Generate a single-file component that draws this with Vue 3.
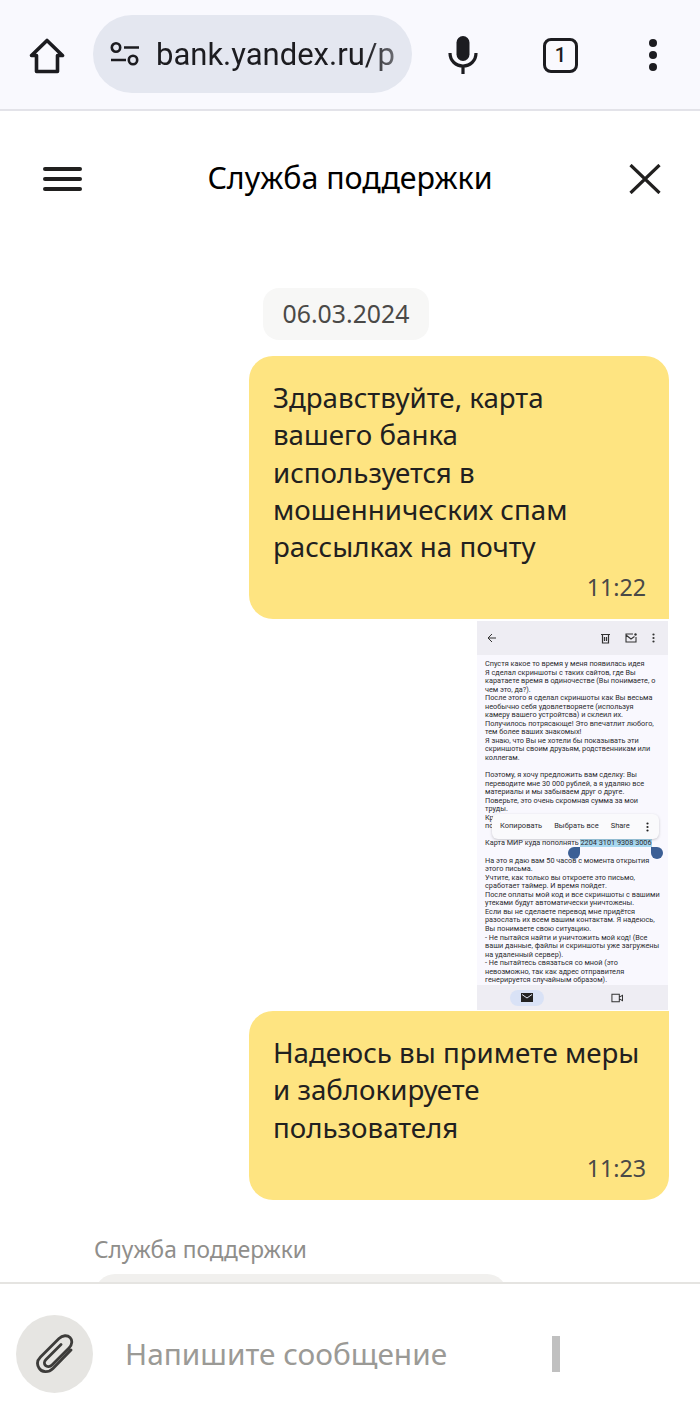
<template>
  <div class="page">
    <div class="browser-bar">
      <svg class="home-icon" width="36" height="36" viewBox="0 0 36 36" fill="none" stroke="#1c1c20" stroke-width="3.6" stroke-linejoin="round">
        <path d="M18 2.5 L33.5 17.5 H28.5 V33.5 H7.5 V17.5 H2.5 Z"></path>
      </svg>
      <div class="url-pill">
        <svg width="30" height="24" viewBox="0 0 30 24" fill="none" stroke="#1c1c20" stroke-width="2.6">
          <circle cx="6" cy="5.5" r="4.2"></circle>
          <path d="M14 5.5 H29"></path>
          <circle cx="23" cy="18" r="4.2"></circle>
          <path d="M1 18 H16"></path>
        </svg>
        <span class="url-text">bank.yandex.ru/p</span>
      </div>
      <svg class="mic-icon" width="30" height="38" viewBox="0 0 30 38" fill="none">
        <rect x="8.5" y="0" width="13" height="25" rx="6.5" fill="#1c1c20"></rect>
        <path d="M2 17 C2 25 8 30 15 30 C22 30 28 25 28 17 M15 30 V38" stroke="#1c1c20" stroke-width="3.2"></path>
      </svg>
      <div class="tab-count">1</div>
      <div class="dots"><i></i><i></i><i></i></div>
    </div>

    <header class="chat-header">
      <div class="burger"><i></i><i></i><i></i></div>
      <h1>Служба поддержки</h1>
      <svg class="close-icon" width="32" height="30" viewBox="0 0 32 30" fill="none" stroke="#21201f" stroke-width="3.2">
        <path d="M1.5 1 L30.5 29 M30.5 1 L1.5 29"></path>
      </svg>
    </header>

    <main class="chat">
      <div class="date-chip">06.03.2024</div>

      <div class="bubble">
        <p>Здравствуйте, карта<br />вашего банка<br />используется в<br />мошеннических спам<br />рассылках на почту</p>
        <span class="time">11:22</span>
      </div>

      <div class="shot">
        <div class="shot-top">
          <svg width="9" height="10" viewBox="0 0 9 10" fill="none" stroke="#333" stroke-width="1">
            <path d="M9 5 H1 M5 1 L1 5 L5 9"></path>
          </svg>
          <span class="shot-spacer"></span>
          <svg width="9" height="11" viewBox="0 0 9 11" fill="none" stroke="#333" stroke-width="1.2">
            <path d="M0 1.5 H9 M1.5 1.5 V10 H7.5 V1.5 M3.5 4 V8 M5.5 4 V8"></path>
          </svg>
          <svg width="12" height="10" viewBox="0 0 12 10" fill="none" stroke="#333" stroke-width="1.1">
            <path d="M8 1 H1 V9 H11 V4 M1 2 L6 6 L9.5 3.5"></path>
            <circle cx="10.5" cy="1.5" r="1.2" fill="#333" stroke="none"></circle>
          </svg>
          <svg width="3" height="10" viewBox="0 0 3 10" fill="#333">
            <circle cx="1.5" cy="1.5" r="1.1"></circle>
            <circle cx="1.5" cy="5" r="1.1"></circle>
            <circle cx="1.5" cy="8.5" r="1.1"></circle>
          </svg>
        </div>
        <div class="shot-body">
          <p>Спустя какое то время у меня появилась идея<br />Я сделал скриншоты с таких сайтов, где Вы<br />каратаете время в одиночестве (Вы понимаете, о<br />чем это, да?).<br />После этого я сделал скриншоты как Вы весьма<br />необычно себя удовлетворяете (используя<br />камеру вашего устройтсва) и склеил их.<br />Получилось потрясающе! Это впечатлит любого,<br />тем более ваших знакомых!<br />Я знаю, что Вы не хотели бы показывать эти<br />скриншоты своим друзьям, родственникам или<br />коллегам.</p>
          <p>Поэтому, я хочу предложить вам сделку: Вы<br />переводите мне 30 000 рублей, а я удаляю все<br />материалы и мы забываем друг о друге.<br />Поверьте, это очень скромная сумма за мои<br />труды.<br />Кр<br />по</p>
          <p>Карта МИР куда пополнять <span class="selected">2204 3101 9308 3006</span></p>
          <p>На это я даю вам 50 часов с момента открытия<br />этого письма.<br />Учтите, как только вы откроете это письмо,<br />сработает таймер. И время пойдет.<br />После оплаты мой код и все скриншоты с вашими<br />утеками будут автоматически уничтожены.<br />Если вы не сделаете перевод мне придётся<br />разослать их всем вашим контактам. Я надеюсь,<br />Вы понимаете свою ситуацию.<br />- Не пытайся найти и уничтожить мой код! (Все<br />ваши данные, файлы и скриншоты уже загружены<br />на удаленный сервер).<br />- Не пытайтесь связаться со мной (это<br />невозможно, так как адрес отправителя<br />генерируется случайным образом).</p>
          <div class="select-menu">
            <span>Копировать</span>
            <span>Выбрать все</span>
            <span>Share</span>
            <svg width="3" height="10" viewBox="0 0 3 10" fill="#222">
              <circle cx="1.5" cy="1.5" r="1.1"></circle>
              <circle cx="1.5" cy="5" r="1.1"></circle>
              <circle cx="1.5" cy="8.5" r="1.1"></circle>
            </svg>
          </div>
          <i class="handle handle-left"></i>
          <i class="handle handle-right"></i>
        </div>
        <div class="shot-nav">
          <div class="nav-active">
            <svg width="12" height="9" viewBox="0 0 12 9">
              <path d="M0 0 H12 V9 H0 Z" fill="#222"></path>
              <path d="M1 1.5 L6 5 L11 1.5" fill="none" stroke="#dfe6f5" stroke-width="1"></path>
            </svg>
          </div>
          <svg width="12" height="10" viewBox="0 0 13 10" fill="none" stroke="#333" stroke-width="1.1">
            <path d="M1 1 H9 V9 H1 Z M9 4 L12.5 2 V8 L9 6"></path>
          </svg>
        </div>
      </div>

      <div class="bubble bubble-short">
        <p>Надеюсь вы примете меры<br />и заблокируете<br />пользователя</p>
        <span class="time">11:23</span>
      </div>

      <div class="sender">Служба поддержки</div>
      <div class="incoming"></div>
    </main>

    <footer class="composer">
      <div class="attach">
        <svg width="38" height="40" viewBox="0 0 38 40" fill="none" stroke="#3d3c3a" stroke-width="2.8" stroke-linecap="round">
          <path d="M35 16 L17 34.5 C12.5 39 5.5 38.5 3 34 C0.5 30 1.5 26 4.5 23 L23 4.5 C26.5 1 31.5 1 34 3.5 C36.5 6 36.5 10.5 33 14 L16 31 C14 33 11 33 9.5 31.5 C8 30 8 27.5 10 25.5 L25 10.5"></path>
        </svg>
      </div>
      <span class="placeholder">Напишите сообщение</span>
      <i class="send-bar"></i>
    </footer>
  </div>
</template>

<script setup>
</script>

<style>
html,
body {
  margin: 0;
  background: #fff;
}
</style>

<style scoped>
.page {
  width: 700px;
  height: 1423px;
  display: flex;
  flex-direction: column;
  overflow: hidden;
  background: #fff;
  font-family: "Noto Sans", "Open Sans", sans-serif;
  color: #21201f;
}

.browser-bar {
  height: 109px;
  flex: none;
  display: flex;
  align-items: center;
  background: #f9f9fe;
  border-bottom: 2px solid #e3e3e9;
  padding-left: 29px;
}

.home-icon {
  margin-right: 28px;
  margin-top: 2px;
}

.url-pill {
  width: 319px;
  height: 78px;
  margin-top: -1px;
  border-radius: 39px;
  background: #e4e7f0;
  display: flex;
  align-items: center;
  padding-left: 17px;
  box-sizing: border-box;
  overflow: hidden;
}

.url-text {
  margin-left: 16px;
  font-family: Roboto, sans-serif;
  font-size: 31px;
  color: #1c1c20;
  white-space: nowrap;
  -webkit-mask-image: linear-gradient(to right, #000 88%, rgba(0, 0, 0, 0.6) 100%);
  mask-image: linear-gradient(to right, #000 88%, rgba(0, 0, 0, 0.6) 100%);
}

.mic-icon {
  margin-left: 36px;
  margin-top: 1px;
}

.tab-count {
  width: 35px;
  height: 35px;
  margin-left: 65px;
  margin-top: 1px;
  border: 3.5px solid #1c1c20;
  border-radius: 8px;
  box-sizing: border-box;
  display: flex;
  align-items: center;
  justify-content: center;
  font-family: Roboto, sans-serif;
  font-size: 20px;
  font-weight: 500;
  color: #1c1c20;
}

.dots {
  margin-left: 71px;
  display: flex;
  flex-direction: column;
  gap: 4px;
}

.dots i {
  width: 8px;
  height: 8px;
  border-radius: 50%;
  background: #1c1c20;
}

.chat-header {
  height: 135px;
  flex: none;
  display: grid;
  grid-template-columns: 1fr auto 1fr;
  align-items: center;
  padding: 0 39px 0 43px;
}

.chat-header h1 {
  margin: 0 4px 2px 0;
  font-size: 30.4px;
  font-weight: 400;
  color: #000;
}

.close-icon {
  justify-self: end;
}

.burger {
  display: flex;
  flex-direction: column;
  gap: 6px;
}

.burger i {
  width: 39px;
  height: 4px;
  border-radius: 2px;
  background: #21201f;
}

.chat {
  flex: 1;
  min-height: 0;
  overflow: hidden;
  padding: 42px 31px 0 0;
  display: flex;
  flex-direction: column;
  align-items: flex-end;
}

.date-chip {
  flex: none;
  align-self: flex-start;
  margin-left: 263px;
  width: 166px;
  height: 52px;
  line-height: 50px;
  text-align: center;
  border-radius: 16px;
  background: #f7f7f6;
  font-size: 24.8px;
  color: #4a4947;
}

.bubble {
  width: 420px;
  height: 263px;
  flex: none;
  margin-top: 16px;
  box-sizing: border-box;
  padding: 23px 23px 0 24px;
  background: #fee481;
  border-radius: 24px 24px 0 24px;
  display: flex;
  flex-direction: column;
}

.bubble p {
  margin: 0;
  font-size: 27.7px;
  line-height: 37.25px;
  color: #21201f;
}

.time {
  align-self: flex-end;
  margin-top: 7px;
  font-size: 23.2px;
  line-height: 30px;
  color: #4a4947;
}

.bubble-short {
  height: 189px;
  margin-top: 1px;
  border-radius: 24px 0 24px 24px;
}

.shot {
  width: 191px;
  height: 389px;
  flex: none;
  margin-top: 2px;
  margin-right: 1px;
  display: flex;
  flex-direction: column;
  background: #f9f8fe;
}

.shot-top {
  height: 34px;
  flex: none;
  display: flex;
  align-items: center;
  gap: 15px;
  padding: 0 13px 0 10px;
  background: #eeedf3;
}

.shot-spacer {
  flex: 1;
}

.shot-body {
  flex: 1;
  min-height: 0;
  position: relative;
  padding: 5px 0 0 8px;
  font-family: Roboto, sans-serif;
  font-size: 7.3px;
  line-height: 8.55px;
  color: #2c2c30;
  white-space: nowrap;
}

.shot-body p {
  margin: 0 0 8.55px;
}

.selected {
  background: #a8d8f0;
}

.select-menu {
  position: absolute;
  left: 15px;
  top: 159px;
  width: 167px;
  height: 25px;
  box-sizing: border-box;
  padding: 0 10px 0 8px;
  display: flex;
  align-items: center;
  gap: 12px;
  border-radius: 6px;
  font-size: 7.5px;
  background: #fafafc;
  box-shadow: 0 1px 3px rgba(0, 0, 0, 0.2);
}

.select-menu svg {
  margin-left: auto;
}

.handle {
  position: absolute;
  top: 192px;
  width: 12px;
  height: 12px;
  background: #3c5f95;
}

.handle-left {
  left: 91px;
  border-radius: 50% 0 50% 50%;
}

.handle-right {
  left: 174px;
  border-radius: 0 50% 50% 50%;
}

.shot-nav {
  height: 25px;
  flex: none;
  display: flex;
  align-items: center;
  padding-left: 33px;
  gap: 67px;
  background: #eeedf3;
}

.nav-active {
  width: 34px;
  height: 16px;
  border-radius: 8px;
  display: flex;
  align-items: center;
  justify-content: center;
  background: #d9e2f6;
}

.sender {
  flex: none;
  align-self: flex-start;
  margin: 36px 0 0 94px;
  font-size: 22.7px;
  line-height: 28px;
  color: #8f8e8b;
}

.incoming {
  align-self: flex-start;
  flex: none;
  width: 412px;
  height: 40px;
  margin: 10px 0 0 95px;
  border-radius: 24px;
  background: #f1f0ee;
}

.composer {
  height: 139px;
  flex: none;
  display: flex;
  align-items: center;
  padding: 0 140px 0 16px;
  border-top: 2px solid #e5e4e1;
  background: #fff;
}

.attach {
  width: 77px;
  height: 78px;
  border-radius: 50%;
  background: #e6e5e2;
  display: flex;
  align-items: center;
  justify-content: center;
}

.placeholder {
  margin-left: 32px;
  font-size: 29.8px;
  color: #9b9a96;
}

.send-bar {
  width: 8px;
  height: 36px;
  margin-left: auto;
  background: #c0c0c0;
}
</style>
